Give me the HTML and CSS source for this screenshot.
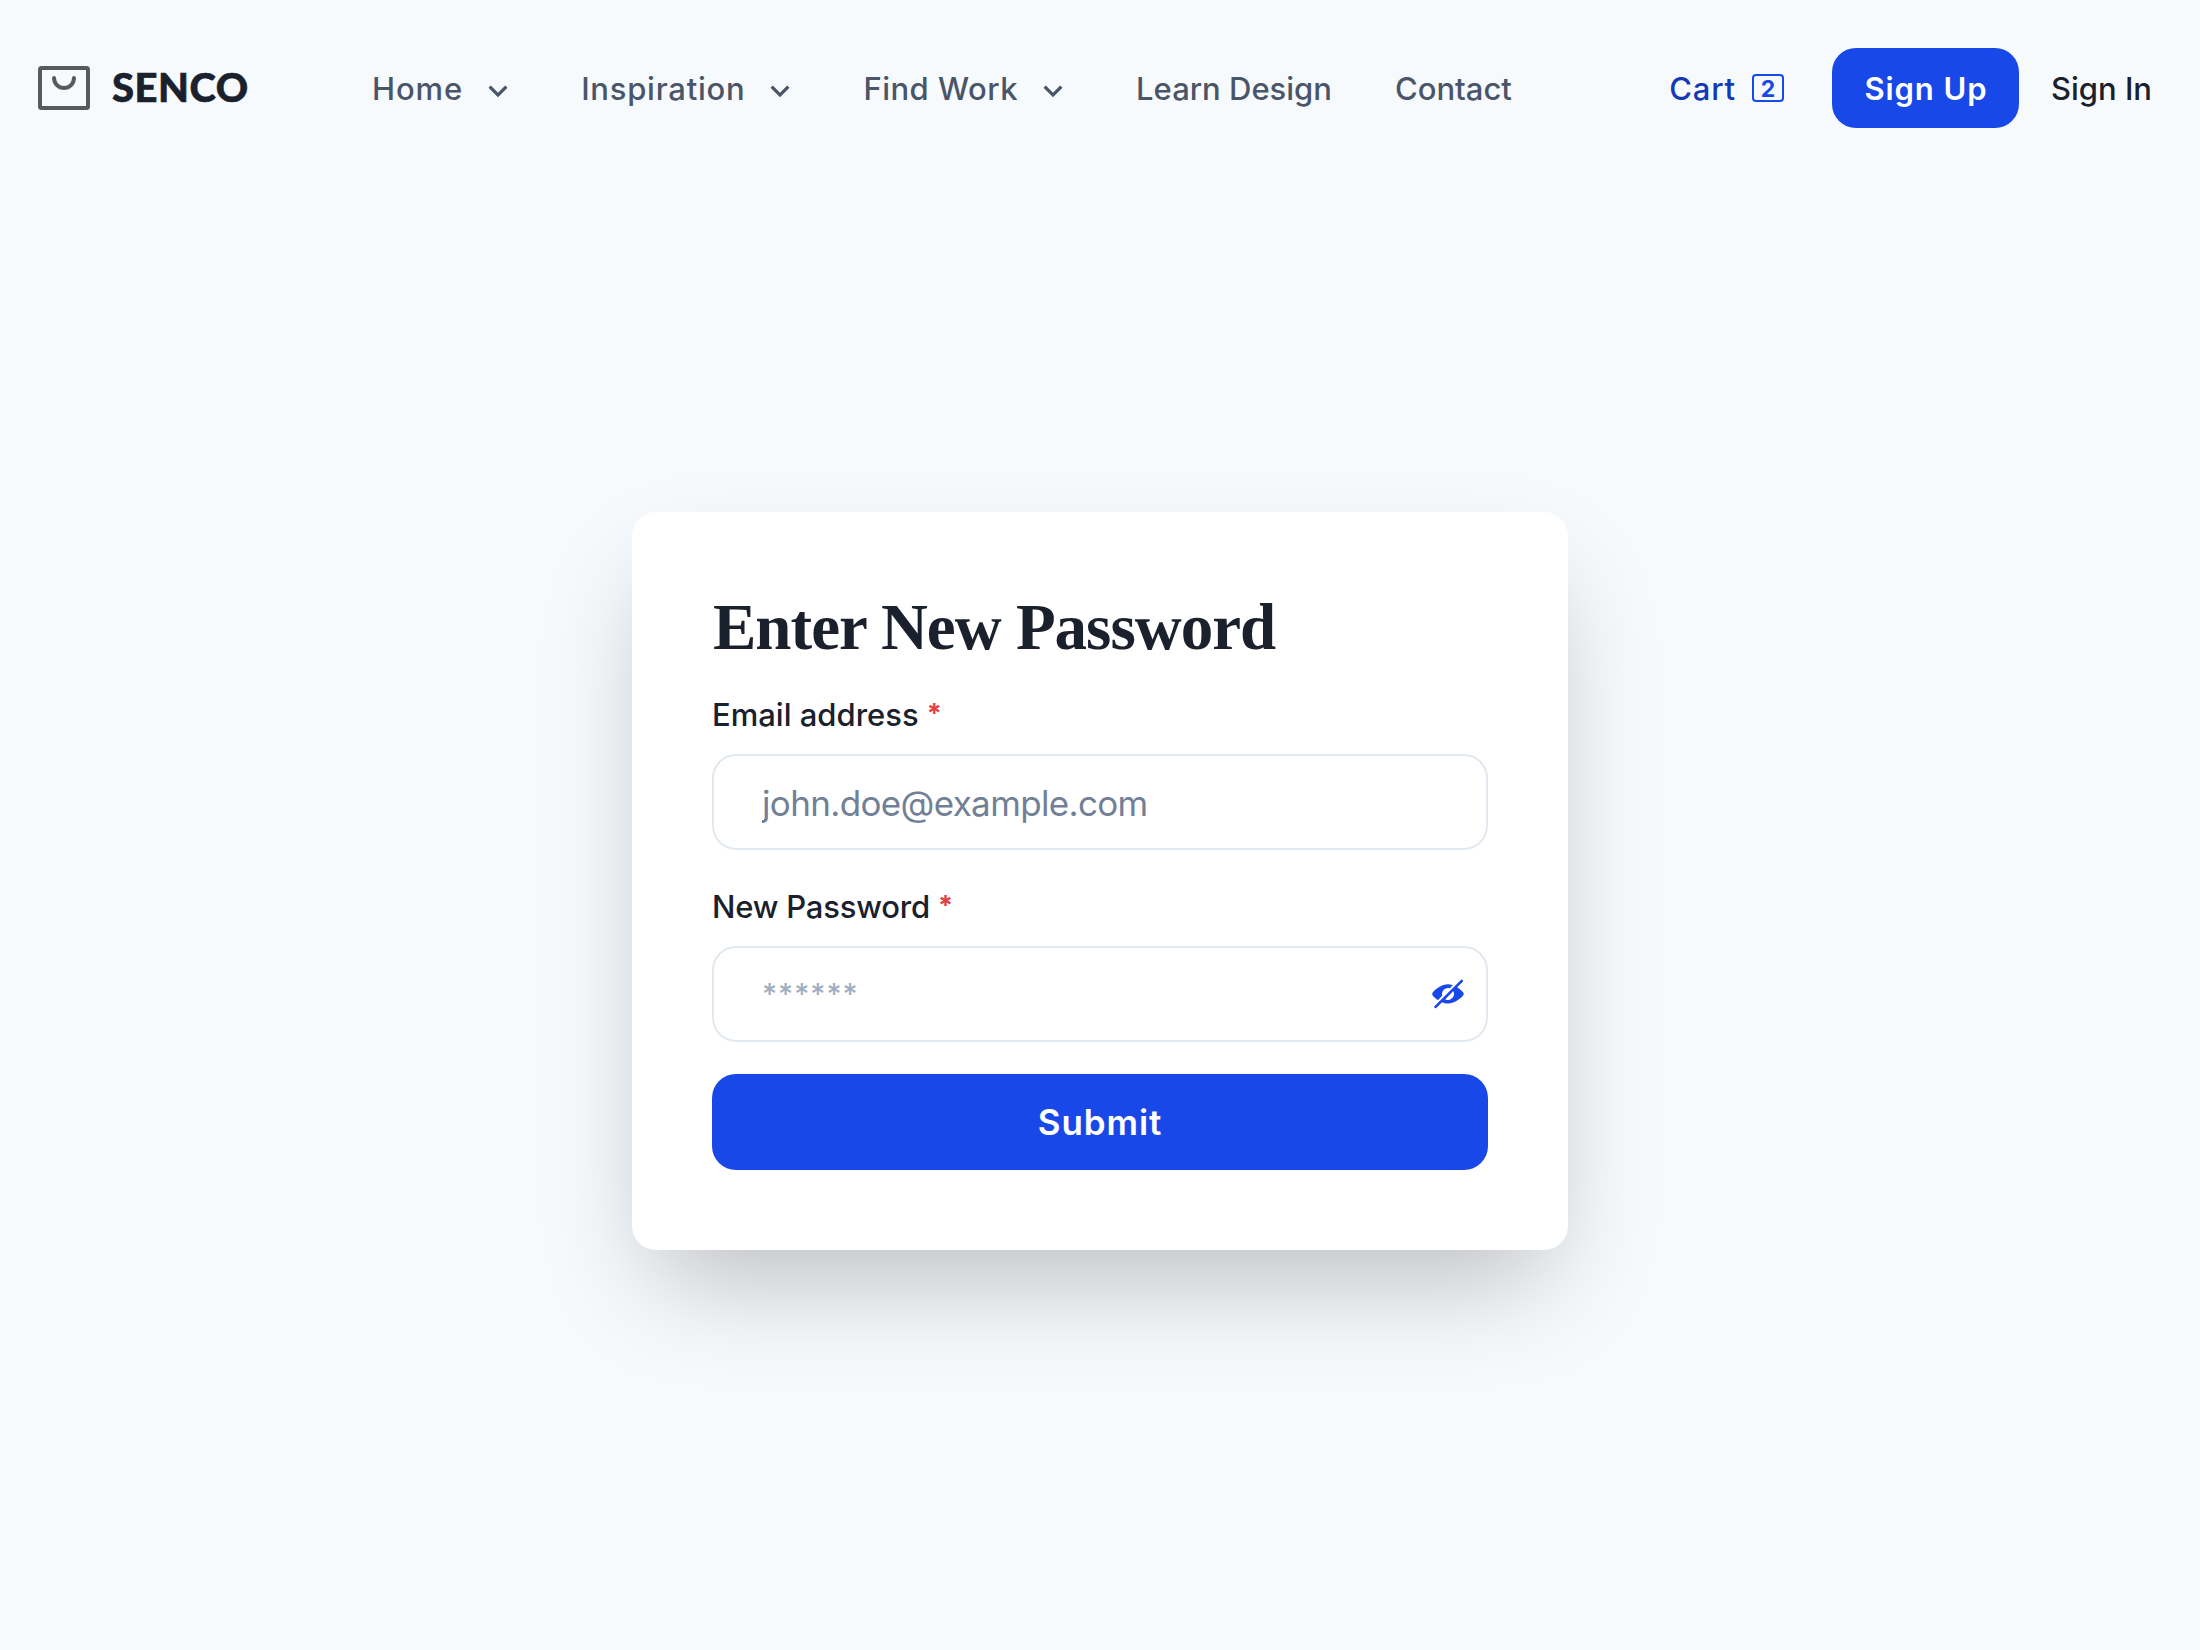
FILE: index.html
```html
<!DOCTYPE html>
<html lang="en">
<head>
  <meta charset="utf-8">
  <title>Senco</title>
  <link rel="stylesheet" href="styles.css">
</head>
<body>
  <header class="header">
    <a class="brand">
      <svg class="brand-mark" viewBox="0 0 52 44" fill="none" stroke="#5a5a5a" stroke-width="4">
        <rect x="2" y="2" width="48" height="40" rx="1.5"/>
        <path d="M16 12a10 10 0 0 0 20 0" stroke-linecap="round"/>
      </svg>
      <span class="brand-name">SENCO</span>
    </a>
    <nav class="nav">
      <a class="nav-item nav-home"><span>Home</span>
        <svg class="chevron" viewBox="0 0 24 24"><path d="M16.293 9.293 12 13.586 7.707 9.293 6.293 10.707 12 16.414 17.707 10.707z"/></svg></a>
      <a class="nav-item nav-wide"><span>Inspiration</span>
        <svg class="chevron" viewBox="0 0 24 24"><path d="M16.293 9.293 12 13.586 7.707 9.293 6.293 10.707 12 16.414 17.707 10.707z"/></svg></a>
      <a class="nav-item nav-work"><span>Find Work</span>
        <svg class="chevron" viewBox="0 0 24 24"><path d="M16.293 9.293 12 13.586 7.707 9.293 6.293 10.707 12 16.414 17.707 10.707z"/></svg></a>
      <a class="nav-item">Learn Design</a>
      <a class="nav-item">Contact</a>
    </nav>
    <div class="actions">
      <a class="cart"><span class="cart-label">Cart</span><span class="cart-count">2</span></a>
      <button class="button sign-up">Sign Up</button>
      <a class="sign-in">Sign In</a>
    </div>
  </header>

  <main class="main">
    <form class="card">
      <h1 class="title">Enter New Password</h1>
      <label class="label" for="email">Email address<span class="required">*</span></label>
      <div class="field">
        <input class="input" id="email" type="email" placeholder="john.doe@example.com">
      </div>
      <label class="label label-password" for="password">New Password<span class="required">*</span></label>
      <div class="field">
        <input class="input input-password" id="password" type="password" placeholder="******">
        <svg class="eye" viewBox="0 0 24 24" fill="currentColor">
          <path d="M23.2,10.549a20.954,20.954,0,0,0-4.3-3.6l4-3.995a1,1,0,1,0-1.414-1.414l-.018.018a.737.737,0,0,1-.173.291l-19.5,19.4c-.008.007-.018.009-.026.017a1,1,0,0,0,1.631,1.088l4.146-4.146a11.26,11.26,0,0,0,4.31.939h.3c4.256,0,8.489-2.984,11.051-5.8A2.171,2.171,0,0,0,23.2,10.549ZM16.313,13.27a4.581,4.581,0,0,1-3,3.028,4.3,4.3,0,0,1-3.1-.19.253.253,0,0,1-.068-.407l5.56-5.559a.252.252,0,0,1,.407.067A4.3,4.3,0,0,1,16.313,13.27Z"/>
          <path d="M7.615,13.4a.244.244,0,0,0,.061-.24A4.315,4.315,0,0,1,7.5,12,4.5,4.5,0,0,1,12,7.5a4.276,4.276,0,0,1,1.16.173.244.244,0,0,0,.24-.062l1.941-1.942a.254.254,0,0,0-.1-.421A10.413,10.413,0,0,0,12,4.75C7.7,4.692,3.4,7.7.813,10.549a2.15,2.15,0,0,0-.007,2.9,21.209,21.209,0,0,0,3.438,3.03.256.256,0,0,0,.326-.029Z"/>
        </svg>
      </div>
      <button class="button submit" type="button">Submit</button>
    </form>
  </main>
</body>
</html>
```
FILE: styles.css
```css
*,
*::before,
*::after {
  box-sizing: border-box;
}

body {
  margin: 0;
  height: 1650px;
  display: flex;
  flex-direction: column;
  background: #f7fafd;
  color: #1a202c;
  font: 500 31px/48px Inter, "Liberation Sans", sans-serif;
  overflow: hidden;
}

.header {
  display: flex;
  align-items: center;
  height: 176px;
  padding: 0 48px 0 38px;
}

.brand {
  display: flex;
  align-items: center;
  width: 334px;
}

.brand-mark {
  width: 52px;
  height: 44px;
}

.brand-name {
  margin: -2px 0 0 22px;
  font: 900 40px/48px Lato, sans-serif;
  letter-spacing: 0.5px;
  -webkit-text-stroke: 0.6px currentColor;
}

.nav {
  display: flex;
  gap: 63px;
  padding-top: 1px;
  color: #4a5568;
}

.nav-item {
  display: flex;
  align-items: center;
  gap: 15px;
  white-space: nowrap;
}

.nav-home {
  letter-spacing: 0.9px;
}

.nav-wide {
  letter-spacing: 0.75px;
}

.nav-work {
  letter-spacing: 0.5px;
}

.chevron {
  width: 40px;
  height: 40px;
  margin-top: 3px;
  fill: currentColor;
}

.actions {
  display: flex;
  align-items: center;
  margin-left: auto;
  white-space: nowrap;
}

.cart {
  display: flex;
  align-items: center;
  gap: 16px;
  margin-right: 48px;
  color: #1539b5;
}

.cart-label {
  padding-top: 1px;
  letter-spacing: 0.8px;
}

.cart-count {
  width: 32px;
  height: 28px;
  padding-top: 1px;
  border: 2px solid #1948e8;
  border-radius: 4px;
  color: #1948e8;
  font-size: 23px;
  font-weight: 700;
  line-height: 24px;
  text-align: center;
}

.button {
  border: 0;
  border-radius: 24px;
  background: #1948e8;
  color: #fff;
  font: 600 31px/48px Inter, sans-serif;
  letter-spacing: 0.9px;
}

.sign-up {
  width: 187px;
  height: 80px;
  padding: 1px 0 0 1px;
  margin-right: 32px;
}

.sign-in {
  padding-top: 1px;
}

.main {
  padding-top: 336px;
}

.card {
  display: flex;
  flex-direction: column;
  width: 936px;
  height: 738px;
  margin: 0 auto;
  padding: 80px;
  border-radius: 24px;
  background: #fff;
  box-shadow: 0 50px 100px -24px rgba(0, 0, 0, 0.25);
}

.title {
  margin: -1px 0 28px 1px;
  font: 700 65px/72px "Liberation Serif", serif;
  letter-spacing: -1px;
  white-space: nowrap;
}

.label {
  height: 48px;
  margin-bottom: 15px;
}

.label-password {
  margin-top: 33px;
  letter-spacing: -0.2px;
}

.required {
  position: relative;
  top: -3px;
  margin-left: 8px;
  color: #e53e3e;
  font-size: 27px;
  font-weight: 700;
  line-height: 1;
}

.field {
  position: relative;
  height: 96px;
}

.input {
  width: 100%;
  height: 96px;
  padding: 1px 48px 0;
  border: 2px solid #e2e8f0;
  border-radius: 24px;
  background: #fff;
  font: 400 35px/48px Inter, sans-serif;
  letter-spacing: -0.65px;
}

.input::placeholder {
  color: #718096;
  opacity: 1;
}

.input-password {
  padding: 0 48px 2px;
  font-size: 29px;
  font-weight: 500;
  letter-spacing: 1px;
}

.input-password::placeholder {
  color: #a0aec0;
}

.eye {
  position: absolute;
  top: 32px;
  right: 24px;
  width: 32px;
  height: 32px;
  color: #1948e8;
}

.submit {
  height: 96px;
  margin-top: 32px;
  padding: 0;
  font-size: 35px;
}
```
